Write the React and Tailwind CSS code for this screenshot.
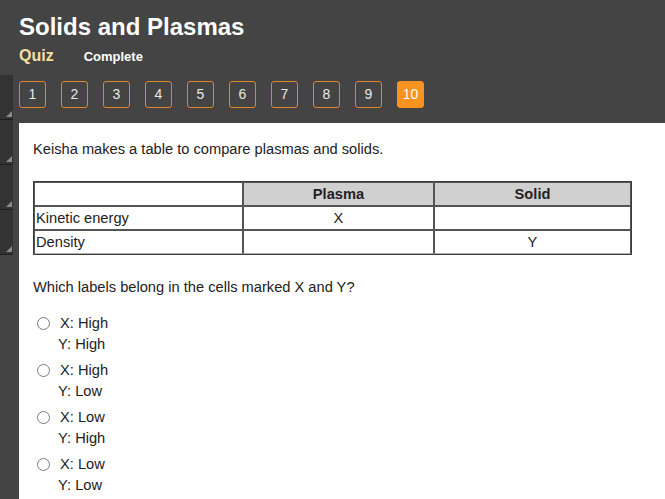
import React from "react";

const font = { fontFamily: '"Liberation Sans", Arial, sans-serif' };

function Tab() {
  return (
    <div className="relative h-[45px] w-[13px] border-b border-[#1e1e1e] bg-[#333333]">
      <div className="absolute bottom-[2px] right-[1px] h-0 w-0 border-b-[6px] border-l-[6px] border-b-[#8a8a8a] border-l-transparent" />
    </div>
  );
}

function NumBtn({ n, active }) {
  return (
    <div
      className={
        active
          ? "flex h-[27px] w-[27px] items-center justify-center rounded-[3px] border border-[#f7931e] bg-[#f7931e] text-[14px] text-white"
          : "flex h-[27px] w-[27px] items-center justify-center rounded-[3px] border border-[#e0862a] text-[14px] text-[#e8e8e8]"
      }
    >
      {n}
    </div>
  );
}

function Option({ x, y }) {
  return (
    <div className="flex flex-col text-[14.67px] leading-[21px] text-[#222]">
      <div className="flex items-center">
        <span className="ml-[4px] mr-[10px] inline-block h-[13px] w-[13px] rounded-full border border-[#7a7a7a] bg-white" />
        <span>X: {x}</span>
      </div>
      <div className="ml-[25px]">Y: {y}</div>
    </div>
  );
}

export default function App() {
  return (
    <div className="flex h-[499px] w-[665px] overflow-hidden bg-[#444444]" style={font}>
      <div className="flex w-[13px] flex-col pt-[75px]">
        <Tab />
        <Tab />
        <Tab />
        <Tab />
      </div>
      <div className="ml-[6px] flex flex-1 flex-col">
        <div className="h-[123px] pt-[13px]">
          <h1 className="text-[24px] font-bold leading-[28px] text-white">Solids and Plasmas</h1>
          <div className="mt-[5px] flex items-baseline leading-[20px]">
            <span className="text-[16px] font-bold text-[#f6dfa2]">Quiz</span>
            <span className="ml-[30px] text-[13px] font-bold text-white">Complete</span>
          </div>
          <div className="mt-[14px] flex gap-[15px]">
            {[1, 2, 3, 4, 5, 6, 7, 8, 9].map((n) => (
              <NumBtn key={n} n={n} />
            ))}
            <NumBtn n={10} active />
          </div>
        </div>
        <div className="flex-1 bg-white pl-[14px] pt-[16px] text-[#222]">
          <p className="text-[14.67px] leading-[21px]">Keisha makes a table to compare plasmas and solids.</p>
          <table className="mt-[21px] w-[597px] table-fixed border-separate border-spacing-0 border border-[#3c3c3c] text-[14.67px] leading-[20px] text-[#222]">
            <colgroup>
              <col className="w-[209px]" />
              <col className="w-[191px]" />
              <col className="w-[197px]" />
            </colgroup>
            <tbody>
              <tr>
                <td className="h-[24px] border border-[#555] p-0"></td>
                <td className="h-[24px] border border-[#555] bg-[#d0d0d0] p-0 text-center font-bold">Plasma</td>
                <td className="h-[24px] border border-[#555] bg-[#d0d0d0] p-0 text-center font-bold">Solid</td>
              </tr>
              <tr>
                <td className="h-[24px] border border-[#555] px-[1px] py-0">Kinetic energy</td>
                <td className="h-[24px] border border-[#555] p-0 text-center">X</td>
                <td className="h-[24px] border border-[#555] p-0"></td>
              </tr>
              <tr>
                <td className="h-[24px] border border-[#555] border-b-[#b0b0b0] px-[1px] py-0">Density</td>
                <td className="h-[24px] border border-[#555] border-b-[#b0b0b0] p-0"></td>
                <td className="h-[24px] border border-[#555] border-b-[#b0b0b0] p-0 text-center">Y</td>
              </tr>
            </tbody>
          </table>
          <p className="mt-[22px] text-[14.67px] leading-[21px]">Which labels belong in the cells marked X and Y?</p>
          <div className="mt-[15px] flex flex-col gap-[5px]">
            <Option x="High" y="High" />
            <Option x="High" y="Low" />
            <Option x="Low" y="High" />
            <Option x="Low" y="Low" />
          </div>
        </div>
      </div>
    </div>
  );
}
